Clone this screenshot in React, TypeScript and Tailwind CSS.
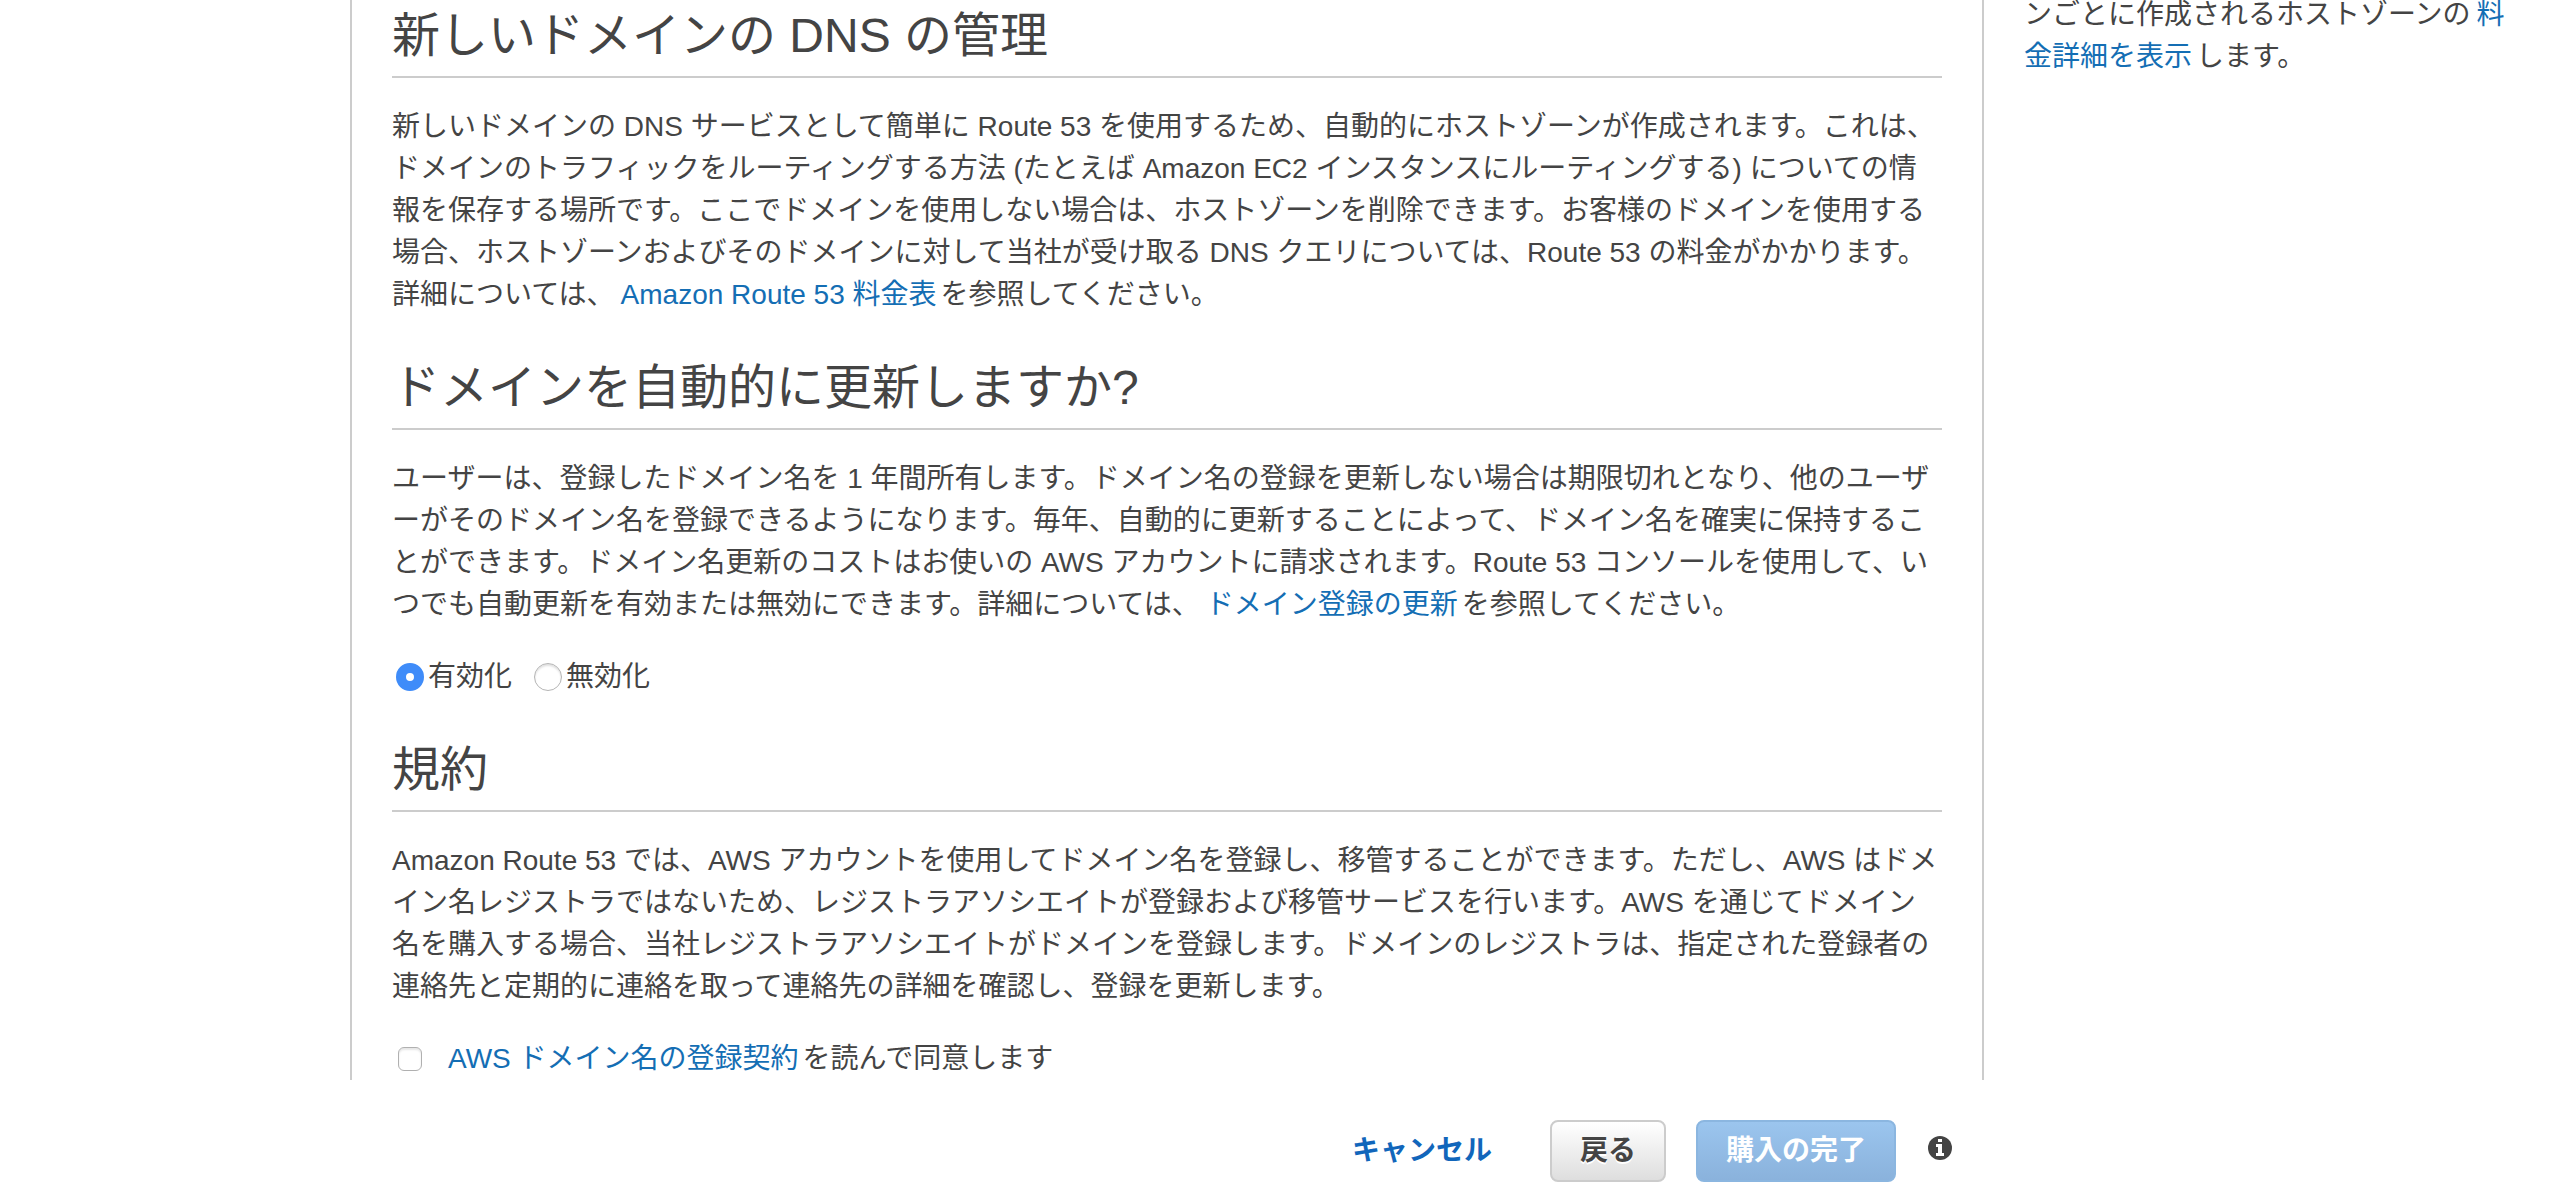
import { useState, type ReactNode } from "react"

function TextLink({ children }: { children: ReactNode }) {
  return (
    <a href="#" className="mr-1 ml-1.5 text-[#146eb4] hover:underline">
      {children}
    </a>
  )
}

function SectionTitle({ children }: { children: ReactNode }) {
  return <h2 className="mb-7 border-b-2 border-[#ccc] pb-2 text-[48px] leading-[64px] font-normal">{children}</h2>
}

function InfoIcon() {
  return (
    <svg viewBox="0 0 24 24" className="size-6" aria-hidden="true">
      <circle cx="12" cy="12" r="12" fill="#444" />
      <path d="M10 3h4v3h-4zM8 8h6v9h2v3H8v-3h2v-6H8z" fill="#fff" />
    </svg>
  )
}

const renewOptions = [
  { label: "有効化", value: "on" },
  { label: "無効化", value: "off" },
]

export default function App() {
  const [renew, setRenew] = useState("on")
  const [agreed, setAgreed] = useState(false)

  return (
    <div
      lang="ja"
      className="min-h-screen overflow-hidden bg-white font-['Liberation_Sans','Noto_Sans_CJK_JP',sans-serif] text-[28px] leading-[42px] text-[#444] [line-break:loose]"
    >
      <div className="flex">
        <main className="ml-[350px] min-w-0 flex-1 border-x-2 border-[#ccc] px-10 pt-1">
          <section>
            <SectionTitle>新しいドメインの DNS の管理</SectionTitle>
            <p>
              新しいドメインの DNS サービスとして簡単に Route 53
              を使用するため、自動的にホストゾーンが作成されます。これは、ドメインのトラフィックをルーティングする方法
              (たとえば Amazon EC2 インスタンスにルーティングする)
              についての情報を保存する場所です。ここでドメインを使用しない場合は、ホストゾーンを削除できます。お客様のドメインを使用する場合、ホストゾーンおよびそのドメインに対して当社が受け取る
              DNS クエリについては、Route 53 の料金がかかります。詳細については、
              <TextLink>Amazon Route 53 料金表</TextLink>を参照してください。
            </p>
          </section>

          <section className="mt-10">
            <SectionTitle>ドメインを自動的に更新しますか?</SectionTitle>
            <p>
              ユーザーは、登録したドメイン名を 1
              年間所有します。ドメイン名の登録を更新しない場合は期限切れとなり、他のユーザーがそのドメイン名を登録できるようになります。毎年、自動的に更新することによって、ドメイン名を確実に保持することができます。ドメイン名更新のコストはお使いの
              AWS アカウントに請求されます。Route 53
              コンソールを使用して、いつでも自動更新を有効または無効にできます。詳細については、
              <TextLink>ドメイン登録の更新</TextLink>を参照してください。
            </p>
            <div className="mt-[30px] flex gap-[22px] pl-1">
              {renewOptions.map((option) => (
                <label key={option.value} className="flex items-center gap-1">
                  <input
                    type="radio"
                    name="renew"
                    value={option.value}
                    checked={renew === option.value}
                    onChange={() => setRenew(option.value)}
                    className="size-7 appearance-none rounded-full border border-[#b5b5b5] bg-white shadow-[inset_0_2px_2px_rgba(0,0,0,0.12)] checked:border-[10px] checked:border-[#3f8cf9] checked:shadow-none"
                  />
                  {option.label}
                </label>
              ))}
            </div>
          </section>

          <section className="mt-10">
            <SectionTitle>規約</SectionTitle>
            <p>
              Amazon Route 53 では、AWS アカウントを使用してドメイン名を登録し、移管することができます。ただし、AWS
              はドメイン名レジストラではないため、レジストラアソシエイトが登録および移管サービスを行います。AWS
              を通じてドメイン名を購入する場合、当社レジストラアソシエイトがドメインを登録します。ドメインのレジストラは、指定された登録者の連絡先と定期的に連絡を取って連絡先の詳細を確認し、登録を更新します。
            </p>
            <div className="mt-[30px] flex items-center gap-5 pl-[6px]">
              <input
                id="agree"
                type="checkbox"
                checked={agreed}
                onChange={(e) => setAgreed(e.target.checked)}
                className="size-6 appearance-none rounded-md border border-[#b0b0b0] bg-white shadow-[inset_0_2px_2px_rgba(0,0,0,0.1)] checked:bg-[#3f8cf9]"
              />
              <label htmlFor="agree">
                <TextLink>AWS ドメイン名の登録契約</TextLink>を読んで同意します
              </label>
            </div>
          </section>
        </main>

        <aside className="-mt-1.5 w-[570px] shrink-0 px-10">
          <p>
            ンごとに作成されるホストゾーンの<TextLink>料金詳細を表示</TextLink>します。
          </p>
        </aside>
      </div>

      <footer className="flex items-center justify-end pt-10 pr-[602px] font-bold">
        <a href="#" className="mr-[58px] text-[#1166bb]">
          キャンセル
        </a>
        <button
          type="button"
          className="mr-[30px] h-[62px] rounded-lg border-2 border-[#ccc] bg-linear-to-b from-white to-[#dedede] px-7 [text-shadow:0_2px_0_#fff]"
        >
          戻る
        </button>
        <button
          type="button"
          disabled={!agreed}
          className="mr-8 h-[62px] rounded-lg border-2 border-[#8bb6e0] bg-linear-to-b from-[#9bc5ee] to-[#8ab2dc] px-7 text-white"
        >
          購入の完了
        </button>
        <button type="button" aria-label="情報" className="mb-1.5">
          <InfoIcon />
        </button>
      </footer>
    </div>
  )
}
